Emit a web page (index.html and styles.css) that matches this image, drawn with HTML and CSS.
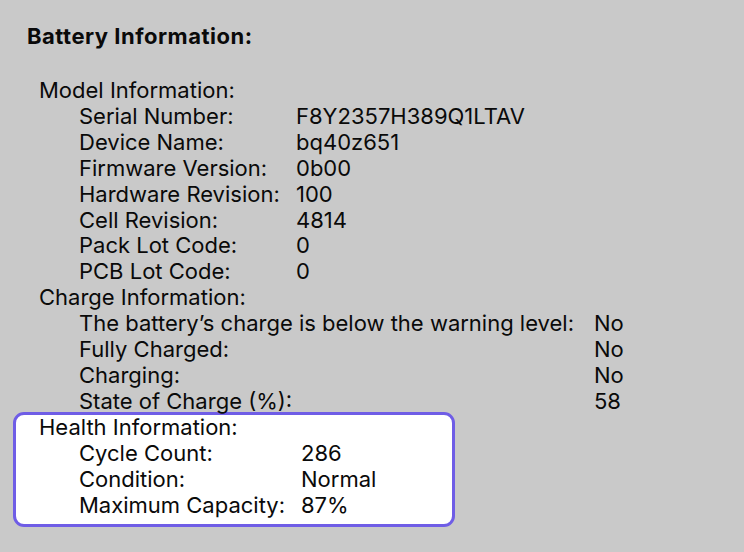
FILE: index.html
```html
<!DOCTYPE html>
<html>
<head>
<meta charset="utf-8">
<title>Battery Information</title>
<link rel="stylesheet" href="styles.css">
</head>
<body>
<div class="report">
  <h2 class="title">Battery Information:</h2>

  <div class="group">
    <div class="group-title">Model Information:</div>
    <div class="rows model">
      <span>Serial Number:</span><span>F8Y2357H389Q1LTAV</span>
      <span>Device Name:</span><span>bq40z651</span>
      <span>Firmware Version:</span><span>0b00</span>
      <span>Hardware Revision:</span><span>100</span>
      <span>Cell Revision:</span><span>4814</span>
      <span>Pack Lot Code:</span><span>0</span>
      <span>PCB Lot Code:</span><span>0</span>
    </div>
  </div>

  <div class="group">
    <div class="group-title">Charge Information:</div>
    <div class="rows charge">
      <span>The battery’s charge is below the warning level:</span><span>No</span>
      <span>Fully Charged:</span><span>No</span>
      <span>Charging:</span><span>No</span>
      <span>State of Charge (%):</span><span>58</span>
    </div>
  </div>

  <div class="group health">
    <div class="group-title">Health Information:</div>
    <div class="rows">
      <span>Cycle Count:</span><span>286</span>
      <span>Condition:</span><span>Normal</span>
      <span>Maximum Capacity:</span><span>87%</span>
    </div>
  </div>

  <h2 class="title next">System Power Settings:</h2>
</div>
</body>
</html>
```

FILE: styles.css
```css
*{ margin:0; padding:0; box-sizing:border-box;}
html,body{ height:100%;}
body{ background:#c9c9c9; color:#0a0a0a; font-family:Inter, "Noto Sans", "Liberation Sans", sans-serif; font-size:22px; line-height:25.9px; overflow:hidden;}

.report{ padding:23px 0 0 27px;}
.title{ font-size:22px; font-weight:700; letter-spacing:0.5px; line-height:26px; margin-bottom:29px;}
.title.next{ margin-top:23px;}

.group-title{ padding-left:12px;}
.rows{ display:grid; grid-template-columns:222px auto; justify-content:start; padding-left:52px;}
.rows.model{ grid-template-columns:217px auto;}
.rows.charge{ grid-template-columns:515px auto;}

.health{ width:442px; margin:-3px 0 0 -14px; padding:0 0 6px 23px; background:#fff; border:3px solid #6f5de6; border-radius:11px;}
.health .group-title{ padding-left:0;}
.health .rows{ padding-left:40px;}
```
